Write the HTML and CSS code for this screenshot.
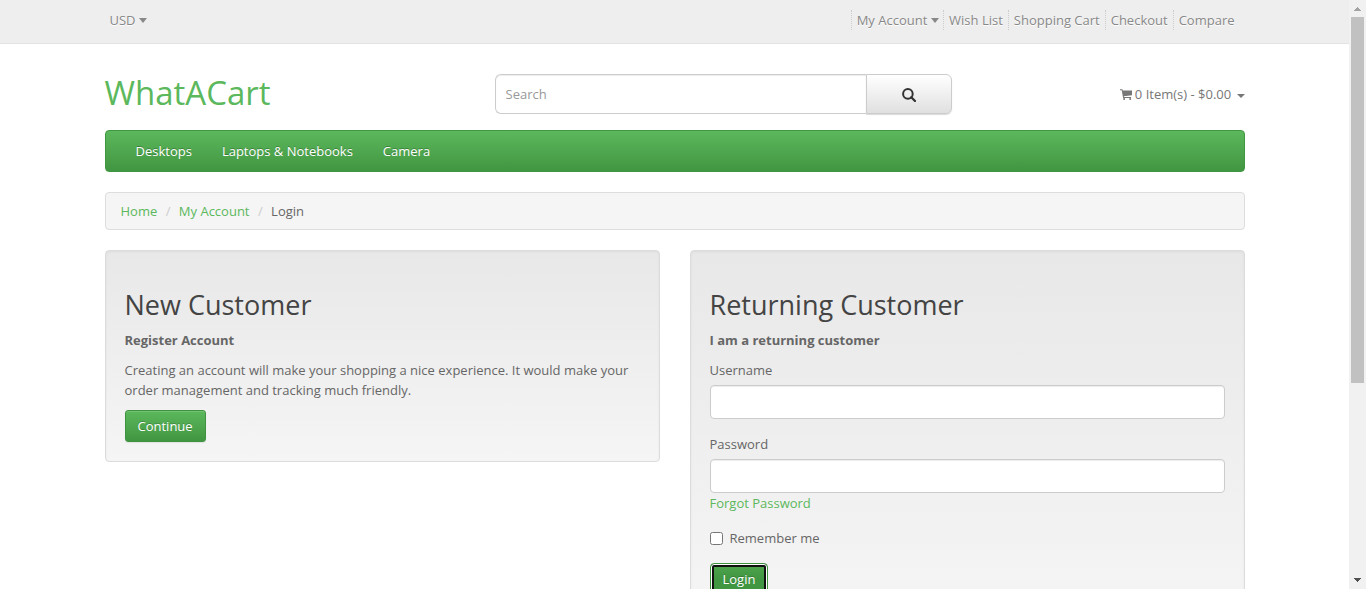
FILE: index.html
```html
<!DOCTYPE html>
<html lang="en">
<head>
<meta charset="utf-8">
<title>Login</title>
<link rel="stylesheet" href="styles.css">
</head>
<body>
<div class="viewport">
  <div class="page">
    <nav class="top">
      <div class="container top-inner">
        <a class="currency">USD <i class="caret-down"></i></a>
        <ul class="links">
          <li>My Account <i class="caret-down"></i></li>
          <li>Wish List</li>
          <li>Shopping Cart</li>
          <li>Checkout</li>
          <li>Compare</li>
        </ul>
      </div>
    </nav>
    <header class="container header">
      <h1 class="logo"><span>WhatACart</span></h1>
      <div class="search">
        <input class="search-input" type="text" placeholder="Search">
        <button class="search-button" type="button" aria-label="Search">
          <svg width="14" height="14" viewBox="0 0 14 14"><circle cx="5.9" cy="5.9" r="4.8" fill="none" stroke="#333" stroke-width="2"/><path d="M9.3 9.3L13 13" stroke="#333" stroke-width="2.3" stroke-linecap="round"/></svg>
        </button>
      </div>
      <div class="cart">
        <svg class="cart-icon" width="12" height="11" viewBox="0 0 12 11"><path fill="#777" d="M0 .3h2.4l.4 1.2H12v4.8L3.8 7.2l.2.8h7v.9H3.1L1.7 1.3H0z"/><circle cx="4.1" cy="9.9" r="1" fill="#777"/><circle cx="10.2" cy="9.9" r="1" fill="#777"/></svg>
        <span>0 Item(s) - $0.00</span>
        <i class="caret"></i>
      </div>
    </header>
    <main class="container">
      <nav class="menu"><a>Desktops</a><a>Laptops &amp; Notebooks</a><a>Camera</a></nav>
      <div class="breadcrumb"><a>Home</a><span class="slash">/</span><a>My Account</a><span class="slash">/</span><span>Login</span></div>
      <div class="columns">
        <section class="well">
          <h2>New Customer</h2>
          <p><strong>Register Account</strong></p>
          <p>Creating an account will make your shopping a nice experience. It would make your order management and tracking much friendly.</p>
          <button class="btn" type="button">Continue</button>
        </section>
        <section class="well">
          <h2>Returning Customer</h2>
          <p><strong>I am a returning customer</strong></p>
          <div class="field">
            <label for="username">Username</label>
            <input class="control" id="username" type="text">
          </div>
          <div class="field">
            <label for="password">Password</label>
            <input class="control" id="password" type="password">
            <a class="forgot">Forgot Password</a>
          </div>
          <label class="remember"><input type="checkbox"><span>Remember me</span></label>
          <button class="btn btn-focus" type="button">Login</button>
        </section>
      </div>
    </main>
  </div>
  <div class="scrollbar">
    <svg width="17" height="17" viewBox="0 0 17 17" shape-rendering="crispEdges"><path fill="#a3a3a3" d="M8 7h1v1h1v1h1v1h1v1H5v-1h1V9h1V8h1z"/></svg>
    <div class="thumb"></div>
    <svg width="17" height="17" viewBox="0 0 17 17" shape-rendering="crispEdges"><path fill="#505050" d="M5 6h7v1h-1v1h-1v1H9v1H8V9H7V8H6V7H5z"/></svg>
  </div>
</div>
</body>
</html>
```
FILE: styles.css
```css
* { box-sizing: border-box; }
body { margin: 0; overflow: hidden; background: #fff; color: #666; font: 13px/20px "Open Sans", sans-serif; }
h1, h2, p, ul { margin: 0; padding: 0; font-weight: 400; }
input, button { font: inherit; }
.viewport { display: flex; height: 589px; overflow: hidden; }
.page { width: 1349px; flex: none; }
.container { width: 1170px; margin: 0 auto; padding: 0 15px; }

.top { height: 44px; background: #eee; border-bottom: 1px solid #e2e2e2; color: #888; text-shadow: 0 1px 0 #fff; }
.top-inner { display: flex; justify-content: space-between; padding: 10px 20px 0; }
.links { display: flex; list-style: none; padding-right: 5px; }
.links li { padding: 0 5px; border-left: 1px dotted #ccc; white-space: nowrap; }
.links li:first-child { padding-right: 4.4px; }
.links li:last-child { padding-right: 0; }
.caret-down { display: inline-block; vertical-align: 2px; border: 4px solid transparent; border-top: 5px solid #888; border-bottom: 0; }

.header { display: flex; height: 86px; }
.logo { width: 390px; padding-top: 31px; font-size: 33px; line-height: 36px; color: #5cb85c; }
.search { display: flex; width: 457.5px; height: 40px; margin-top: 30px; }
.search-input { width: 371px; padding: 0 10px; border: 1px solid #ccc; border-right: 0; border-radius: 6px 0 0 6px; background: #fff; box-shadow: inset 0 1px 1px rgba(0,0,0,.075); }
.search-input::placeholder { color: #999; opacity: 1; }
.search-button { display: flex; align-items: center; justify-content: center; flex: 1; padding: 2px 0 0; border: 1px solid #ccc; border-radius: 0 6px 6px 0; background: linear-gradient(#fff, #e0e0e0); box-shadow: 0 1px 1px rgba(0,0,0,.15); }
.cart { display: flex; align-items: center; flex: 1; height: 20px; margin-top: 40px; justify-content: flex-end; color: #777; }
.cart-icon { margin-right: 3px; }
.caret { margin: 4px 0 0 5.3px; border: 4px solid transparent; border-top-color: #777; border-bottom: 0; }

.menu { display: flex; height: 42px; padding: 10px 15px 0; border: 1px solid #419641; border-radius: 4px; background: linear-gradient(#5cb85c, #419641); color: #fff; text-shadow: 0 -1px 0 rgba(0,0,0,.25); }
.menu a { padding: 0 15px; }
.breadcrumb { display: flex; height: 38px; margin: 20px 0; padding: 8px 15px; border: 1px solid #ddd; border-radius: 4px; background: #f5f5f5; }
.breadcrumb a, .forgot { color: #5cb85c; }
.slash { width: 21.6px; text-align: center; color: #ccc; }

.columns { display: flex; align-items: flex-start; gap: 30px; }
.well { flex: 1; padding: 19px; border: 1px solid #dcdcdc; border-radius: 4px; background: linear-gradient(#e8e8e8, #f5f5f5); box-shadow: inset 0 1px 3px rgba(0,0,0,.05), 0 1px 0 rgba(255,255,255,.1); }
.well h2 { margin: 20px 0 10px; font-size: 27px; line-height: 30px; color: #444; }
.well p { margin-bottom: 10px; }
.field { margin-bottom: 15px; }
.field label, .forgot { display: block; }
.control { display: block; width: 100%; height: 34px; margin-top: 5px; padding: 6px 12px; border: 1px solid #ccc; border-radius: 4px; background: #fff; box-shadow: inset 0 1px 1px rgba(0,0,0,.075); }
.remember { display: flex; align-items: center; gap: 7px; margin-bottom: 15px; }
.remember input { width: 13px; height: 13px; margin: 1px 0 0; }
.btn { display: block; height: 32px; padding: 0 12px; border: 1px solid #3f923f; border-radius: 3px; background: linear-gradient(#5cb85c, #419641); color: #fff; text-shadow: 0 -1px 0 rgba(0,0,0,.2); box-shadow: inset 0 1px 0 rgba(255,255,255,.15), 0 1px 1px rgba(0,0,0,.075); }
.btn-focus { border-radius: 4px; background: linear-gradient(#4ea64e, #419641 50%); box-shadow: inset 0 0 0 1px #fff, inset 0 0 0 3px #101010; }

.scrollbar { display: flex; flex-direction: column; width: 17px; background: #f1f1f1; }
.thumb { width: 13px; height: 366px; margin: 0 2px auto; background: #c1c1c1; }
```
